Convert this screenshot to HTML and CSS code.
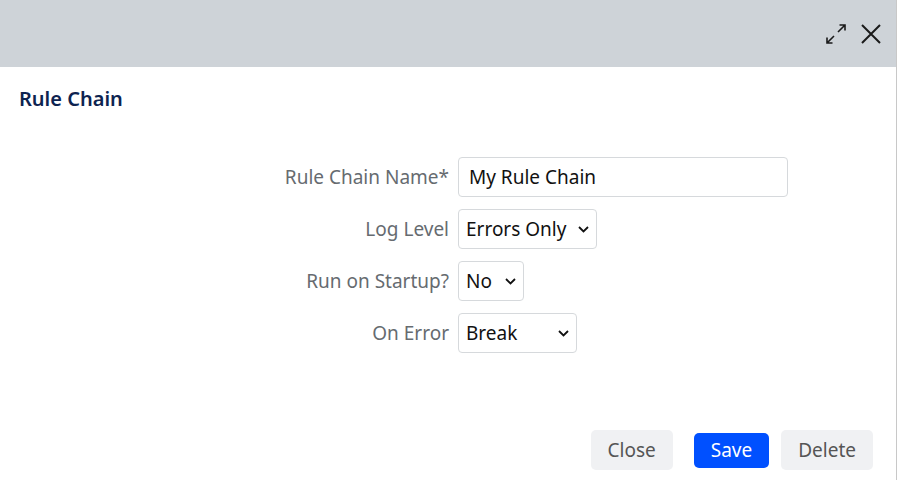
FILE: index.html
```html
<!DOCTYPE html>
<html lang="en">
<head>
    <meta charset="UTF-8">
    <title>Rule Chain</title>
    <link rel="stylesheet" href="styles.css">
</head>
<body>
    <div class="dialog">
        <div class="dialog-header">
            <button class="icon-button" title="Maximize">
                <svg width="24" height="24" viewBox="0 0 24 24" fill="none" stroke="#1a1a1a" stroke-width="1.6">
                    <path d="M14 10 L21 3 M15.5 3 H21 V8.5"/>
                    <path d="M10 14 L3 21 M3 15.5 V21 H8.5"/>
                </svg>
            </button>
            <button class="icon-button" title="Close">
                <svg width="20" height="20" viewBox="0 0 20 20" fill="none" stroke="#1a1a1a" stroke-width="2">
                    <path d="M1 1 L19 19 M19 1 L1 19"/>
                </svg>
            </button>
        </div>

        <div class="dialog-body">
            <h2 class="dialog-title">Rule Chain</h2>

            <form class="rule-form">
                <label for="chainName">Rule Chain Name*</label>
                <input type="text" id="chainName" class="text-input" value="My Rule Chain">

                <label for="logLevel">Log Level</label>
                <div class="select-wrap">
                    <select id="logLevel" class="select-input select-log">
                        <option>Errors Only</option>
                    </select>
                    <svg class="chevron" width="11" height="7" viewBox="0 0 11 7" fill="none" stroke="#111" stroke-width="1.8">
                        <path d="M1 1 L5.5 5.5 L10 1"/>
                    </svg>
                </div>

                <label for="runStartup">Run on Startup?</label>
                <div class="select-wrap">
                    <select id="runStartup" class="select-input select-short">
                        <option>No</option>
                    </select>
                    <svg class="chevron" width="11" height="7" viewBox="0 0 11 7" fill="none" stroke="#111" stroke-width="1.8">
                        <path d="M1 1 L5.5 5.5 L10 1"/>
                    </svg>
                </div>

                <label for="onError">On Error</label>
                <div class="select-wrap">
                    <select id="onError" class="select-input select-wide">
                        <option>Break</option>
                    </select>
                    <svg class="chevron" width="11" height="7" viewBox="0 0 11 7" fill="none" stroke="#111" stroke-width="1.8">
                        <path d="M1 1 L5.5 5.5 L10 1"/>
                    </svg>
                </div>
            </form>
        </div>

        <div class="dialog-footer">
            <button class="btn btn-light">Close</button>
            <button class="btn btn-primary">Save</button>
            <button class="btn btn-light">Delete</button>
        </div>
    </div>
</body>
</html>
```

FILE: styles.css
```css
body {
    margin: 0;
    font-family: 'Noto Sans', 'Open Sans', sans-serif;
    background-color: #fff;
}

.dialog {
    width: 896px;
    height: 480px;
    border-right: 1px solid #c8c8c8;
    display: flex;
    flex-direction: column;
}

.dialog-header {
    height: 67px;
    background-color: #ced3d8;
    display: flex;
    justify-content: flex-end;
    align-items: center;
    gap: 13px;
    padding-right: 15px;
    box-sizing: border-box;
}

.icon-button {
    background: none;
    border: none;
    padding: 0;
    cursor: pointer;
    display: flex;
}

.dialog-body {
    flex: 1;
    padding: 18px 19px 0;
}

.dialog-title {
    margin: 0;
    font-size: 20px;
    font-weight: 600;
    color: #0d2350;
    line-height: 28px;
}

.rule-form {
    display: grid;
    grid-template-columns: 430px auto;
    column-gap: 9px;
    row-gap: 12px;
    margin-top: 44px;
    align-items: center;
    justify-items: start;
}

.rule-form label {
    justify-self: end;
    font-size: 19px;
    color: #666b70;
}

.text-input,
.select-input {
    font-family: inherit;
    font-size: 19px;
    color: #111;
    height: 40px;
    border: 1px solid #d6d9dc;
    border-radius: 4px;
    background-color: #fff;
    box-sizing: border-box;
}

.text-input {
    width: 330px;
    padding: 0 10px;
}

.select-wrap {
    position: relative;
    display: flex;
}

.select-input {
    appearance: none;
    -webkit-appearance: none;
    padding: 0 28px 0 7px;
}

.select-log {
    width: 139px;
}

.select-short {
    width: 66px;
}

.select-wide {
    width: 119px;
}

.chevron {
    position: absolute;
    right: 8px;
    top: 17px;
    pointer-events: none;
}

.dialog-footer {
    display: flex;
    justify-content: flex-end;
    align-items: center;
    gap: 12px;
    padding: 0 23px 10px 0;
}

.btn {
    font-family: inherit;
    font-size: 19px;
    border: none;
    border-radius: 5px;
    cursor: pointer;
    height: 40px;
    padding: 0 17px;
}

.btn-light {
    background-color: #f0f1f3;
    color: #555;
}

.btn-primary {
    background-color: #0050ff;
    color: white;
    height: 35px;
    margin-left: 9px;
}
```
